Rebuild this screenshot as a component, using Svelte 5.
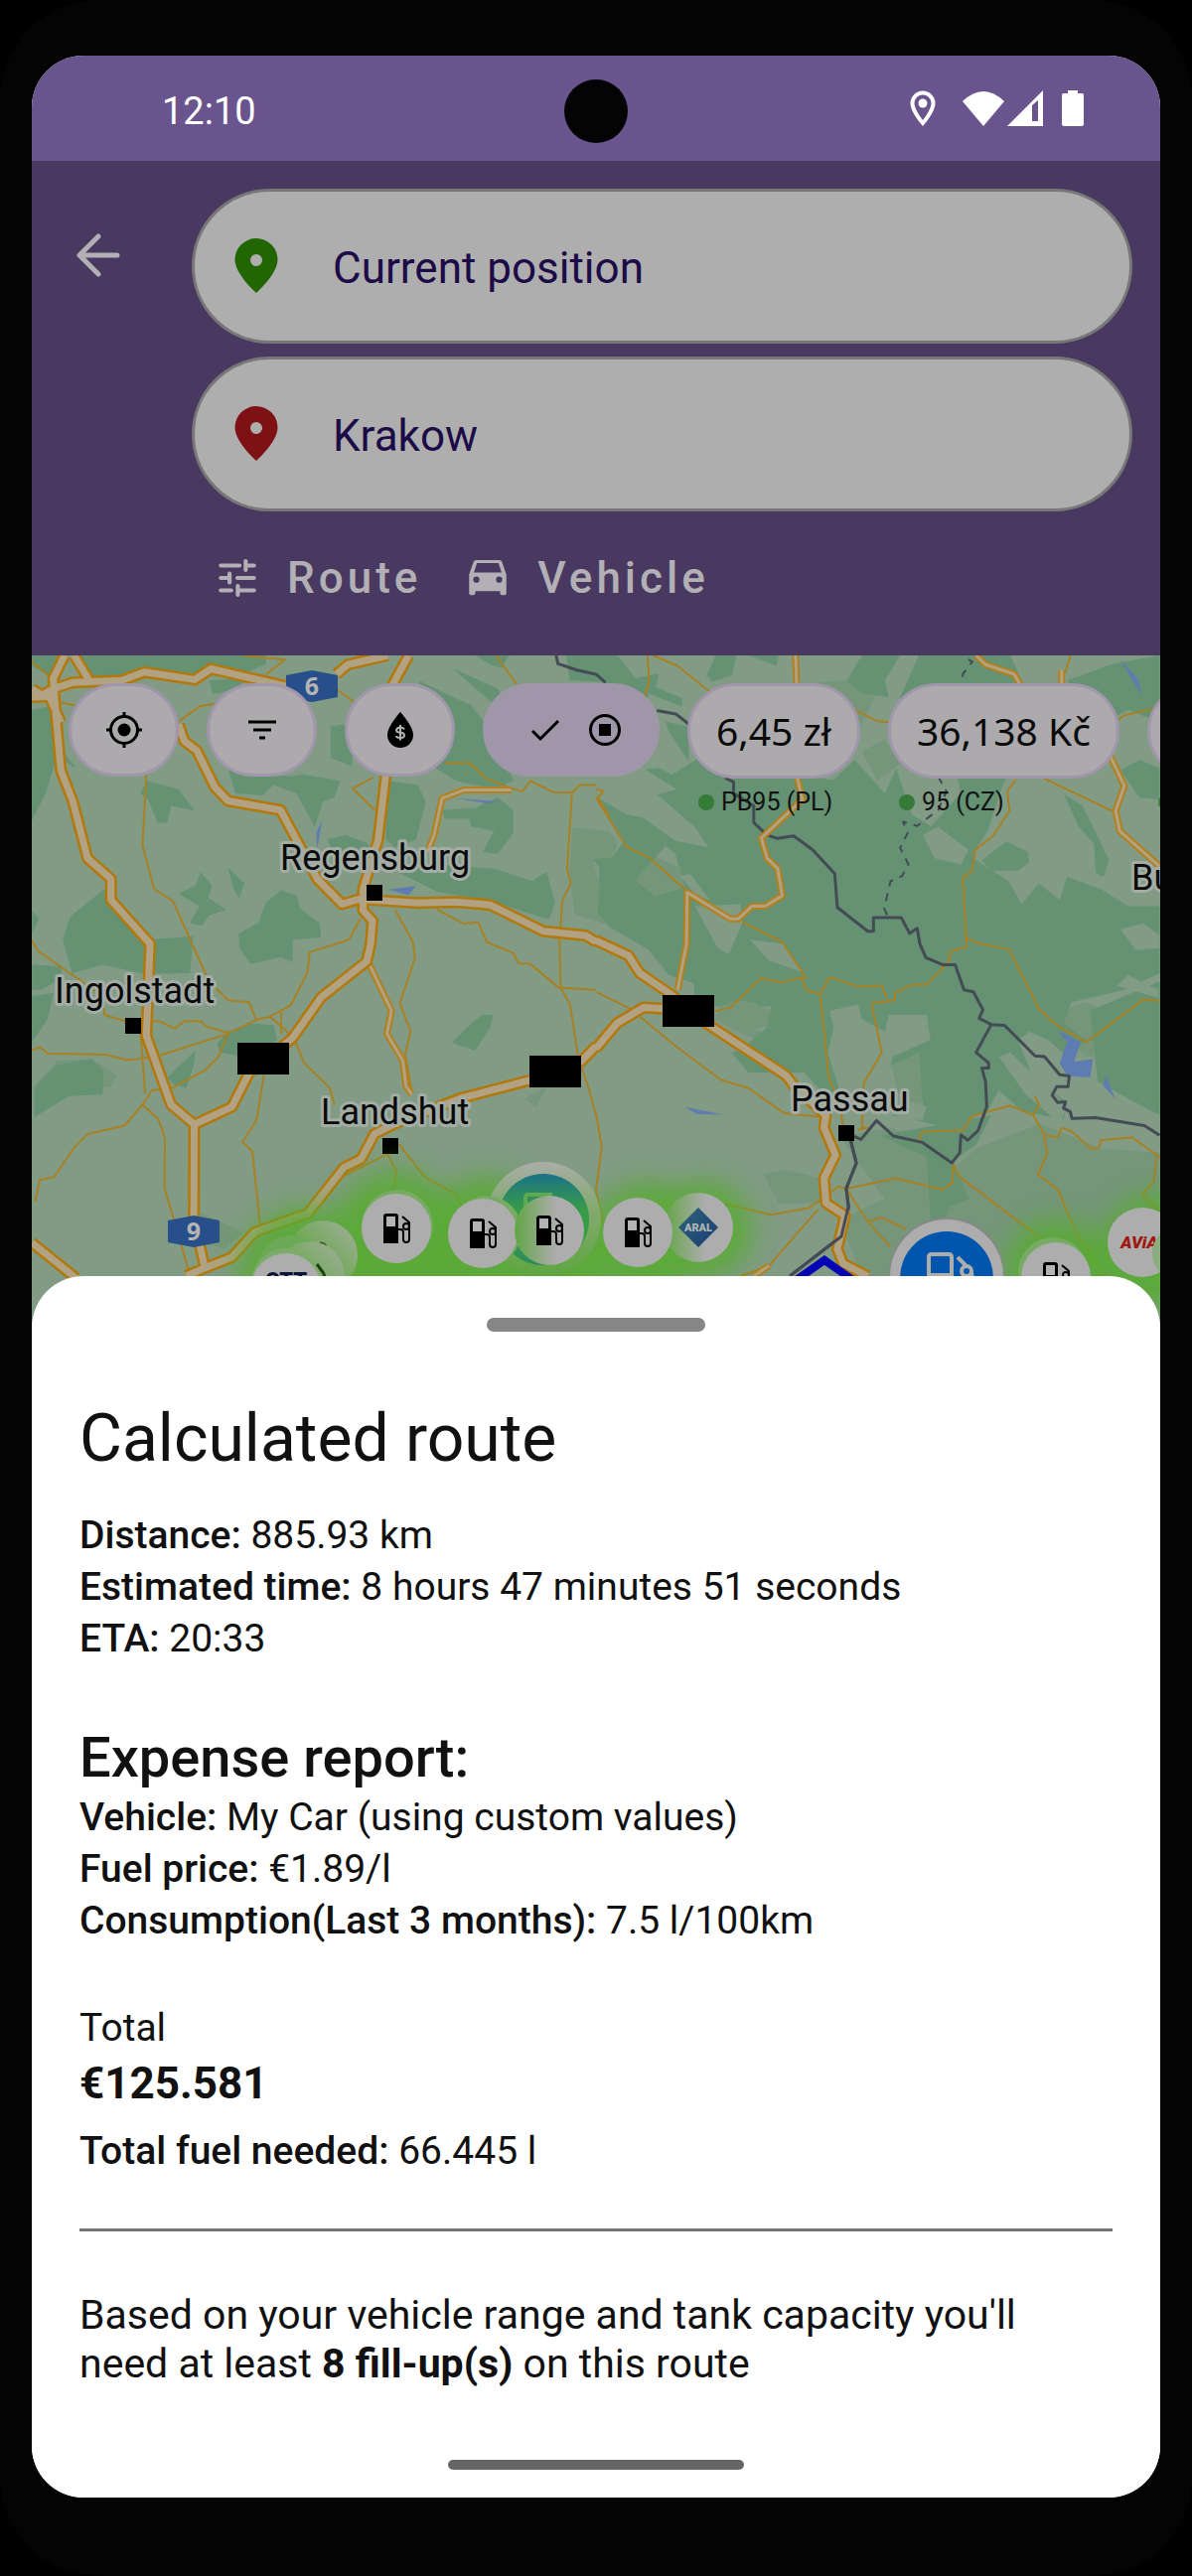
<script>
	// Route planner screen with the calculated route sheet open

	let from = 'Current position';
	let to = 'Krakow';

	const fuelPrices = [
		{ price: '6,45 zł', label: 'PB95 (PL)' },
		{ price: '36,138 Kč', label: '95 (CZ)' }
	];

	const tripDetails = [
		{ name: 'Distance:', value: '885.93 km' },
		{ name: 'Estimated time:', value: '8 hours 47 minutes 51 seconds' },
		{ name: 'ETA:', value: '20:33' }
	];

	const expenses = [
		{ name: 'Vehicle:', value: 'My Car (using custom values)' },
		{ name: 'Fuel price:', value: '€1.89/l' },
		{ name: 'Consumption(Last 3 months):', value: '7.5 l/100km' }
	];

	// Map data. West and east are the two map tiles, each 1568 units wide
	const west = {
		forest: [
			'M84 0H160L130 50L84 25Z', 'M205 0H700V20L640 45L560 20L510 55L380 35L300 60L240 50Z',
			'M550 60L650 55L620 80L560 92Z', 'M84 130L140 120L165 230L200 270L150 240L120 330L84 395Z',
			'M370 330L385 300L470 320L512 372L450 360L440 400L415 400L390 345Z',
			'M700 75L770 80L740 130L700 100Z', 'M870 170L905 165L930 210L925 265L870 245Z',
			'M600 270L760 290L800 285L895 300L880 340L850 350L828 410L780 330L720 310L690 335L620 330Z',
			'M470 570L515 550L528 518L558 550L548 580L595 608L550 622L530 647L500 640L525 600Z',
			'M600 508L643 545L630 580L615 560Z',
			'M85 610L103 630L84 665Z', 'M165 680L185 625L280 555L310 590L390 680L508 672L500 760L380 762L270 740L190 760Z',
			'M628 665L680 640L700 590L740 562L780 575L790 605L840 640L845 675L770 680L770 735L740 722L660 738L630 700Z',
			'M85 740L165 745L155 775L110 800L84 800Z', 'M84 815L140 808L125 870L84 925Z',
			'M90 1035L150 980L240 965L272 995L270 1050L180 1055L90 1105Z',
			'M570 930L600 900L660 880L720 885L730 920L640 960L580 950Z',
			'M440 1010L515 945L510 980L490 1035L455 1025Z',
			'M1020 300L1100 310L1120 350L1095 440L1040 460L1015 440Z',
			'M1250 0H1340L1320 30L1290 22Z',
			'M1100 60L1240 120L1290 180L1330 250L1350 300L1300 320L1200 300L1130 260L1180 225Z',
			'M1165 370L1250 365L1310 340L1350 370L1350 425L1310 475L1270 470L1300 420L1240 410L1235 390L1170 390Z',
			'M860 440L910 430L970 450L960 500L900 510Z',
			'M1050 520L1140 500L1300 510L1400 540L1438 518L1460 590L1445 632L1300 590L1150 565Z',
			'M1190 925L1240 880L1268 860H1298L1290 890L1250 945L1200 930Z',
			'M1190 30L1310 80L1360 150L1290 110Z'
		],
		mid: [
			'M90 1030L150 970L240 965L308 1005L290 1035L250 1030L180 1010Z',
			'M520 1330L640 1380L590 1420L520 1400Z', 'M1380 1060L1440 1030L1410 1080Z'
		],
		water: ['M848 392L835 462L832 425Z', 'M1200 342L1315 350L1280 354Z', 'M1022 560L1094 552L1075 574Z'],
		minor: [
			'M385 285L375 455L405 558L455 588L550 780L600 825L656 830L674 872L600 905L410 960L335 968L280 955L125 952L105 937L84 945',
			'M84 682L100 707L215 780L270 815L275 860L340 878L420 875L460 893L485 875L530 875L540 887L600 903L575 960L540 992L450 1036L400 1040L375 1075L328 1125L230 1145L195 1178L142 1248L105 1255L92 1308',
			'M375 1075L417 1110L434 1155L433 1275L465 1372L500 1485', 'M370 905L382 1048',
			'M948 630L918 680L815 710L808 760L765 837L710 864L674 872', 'M710 864L750 895L780 930L800 975L868 1035L880 1075',
			'M740 850V905', 'M695 1000L675 1112L638 1164L664 1186L685 1370', 'M1040 610L1086 684L1092 724L1052 832L1080 898L1066 955L1085 1050',
			'M1150 608L1220 642L1258 638L1281 686L1350 712L1365 737L1395 738L1470 795L1568 800',
			'M1505 330L1492 510L1502 545L1480 585L1472 680L1475 795L1500 835L1520 955L1550 1040L1568 1100',
			'M1345 318L1375 325L1395 300L1455 327L1505 328L1525 310H1568M1170 257H1235L1280 295L1345 318',
			'M1050 1170L1118 1248L1200 1290L1213 1315', 'M1015 1185L1043 1235L1034 1290', 'M1015 1195L905 1245',
			'M940 30L985 0M985 370L928 318L982 292', 'M470 158L525 122L590 112', 'M640 0L750 10L700 45M820 40L930 110M1305 0L1360 70', 'M84 15L130 50M145 110L200 120'
		],
		major: [
			'M1125 470L1142 430L1163 342L1220 322H1345', 'M972 740L1030 850L1018 905L1060 970L1068 1030L1083 1050'
		],
		motorway: [
			'M170 0L140 55L148 150L160 275L192 350L230 485L292 535V585L395 690L385 910L450 1075L511 1122L510 1345L540 1470',
			'M84 80L110 95L140 80L190 65L320 60L380 40L512 58L555 32L760 75', 'M195 0L235 60', 'M84 100L130 98L160 160',
			'M885 45L915 22L1020 0', 'M1075 0L1030 75', 'M1015 285L995 440L955 560V610L980 635L975 690L965 732L845 818L770 915L655 1000L610 1080L511 1122',
			'M470 165L485 205L518 228L565 315L600 348L738 370L835 535L900 595L945 583L1100 592L1200 590L1290 597L1430 660L1540 670L1568 685',
			'M1400 1015L1210 1060L1040 1120L985 1145L950 1205L905 1225L810 1335L670 1380L610 1440L540 1465L490 1485',
			'M84 1405L200 1490', 'M1525 975L1568 935'
		]
	};

	const east = {
		forest: [
			'M290 50L310 10L360 0L355 30L330 55Z',
			'M400 0H480L475 25Z', 'M660 60L700 0H800L760 60L770 100L700 90Z',
			'M800 100L850 0H1090L1120 60L1140 180L1070 310L1030 420L995 470L1000 500L970 540L900 470L860 480L870 420L960 330L930 200L850 150Z',
			'M300 290L450 300L600 320L680 250L760 330L790 270L830 380L900 420L930 470L965 530L1000 490L1085 540L1120 595L1165 545L1220 585L1240 530L1330 560L1400 600L1483 600V760L1390 800L1250 830L1230 880L1290 920L1240 960L1190 920L1140 900L1110 920L1150 1010L1240 1070L1230 1110L1120 1090L1060 1040L1030 1090L930 1130L780 1100L860 1080L850 950L730 1000L700 1080L600 1050L510 960L360 960L450 890L470 800L300 760Z',
			'M800 1140L1040 1100L1000 1170L940 1210L980 1300L930 1320L900 1400L880 1350L870 1200L750 1150Z',
			'M1240 60L1360 20L1483 0V160L1400 130L1320 170Z', 'M1230 330L1280 360L1350 490L1335 530L1315 520L1310 450L1270 410Z',
			'M1015 490L1080 445L1135 470L1140 495L1110 515L1040 515Z', 'M1300 850L1483 780V1100L1400 1060L1320 1020Z',
			'M1380 275L1430 250L1483 270V345L1430 340Z'
		],
		mid: [
			'M400 100L530 70L760 50L680 200L560 260L480 250L520 170Z',
			'M350 830L420 830L455 860L400 910L345 880Z', 'M640 1150L780 1130L950 1220L1000 1180L1170 1120L1330 1180L1483 1190V1485H700L640 1350L760 1300L680 1200Z',
			'M770 960L860 950L905 985L850 1080L800 1060Z', 'M440 1240L500 1230L590 1250V1310L480 1310Z',
			'M1170 860L1290 830L1430 890L1400 950L1290 960Z', 'M700 230L760 200L800 260L740 300Z'
		],
		clearing: [
			'M260 600L380 595L385 640L350 715L320 700Z',
			'M405 680L490 690L550 760L455 730Z', 'M615 850L690 835L700 870L760 900L770 860L870 860L880 920L780 960L770 1010L800 1060L870 1080L860 1110L810 1115L740 1060L640 1040L610 950L625 890Z',
			'M860 430L900 410L980 465L960 500L890 485Z', 'M1060 960L1090 950L1240 1080L1220 1120L1130 1050Z',
			'M1380 655L1440 640L1483 670V700L1420 705Z', 'M1370 790L1400 765L1480 800V820Z'
		],
		water: ['M1215 898L1275 925L1258 972L1307 966L1300 1010L1240 1006L1220 975L1240 925Z', 'M1342 1005L1365 1060L1335 1030Z', 'M232 1080L335 1099L265 1097Z', 'M1380 10L1425 55L1435 95L1405 50Z'],
		minor: [
			'M135 0L140 60L128 100M150 0L215 25L300 88', 'M0 340L80 458L142 485L240 565', 'M0 805L90 845L210 935L328 1015L402 1036L495 1095L600 1105',
			'M310 852L355 842L432 773L490 782L540 770L552 800L590 810L615 770L690 792L752 790L765 820', 'M385 638L490 686L552 770L540 775',
			'M590 810L613 1015L640 1060L650 1130', 'M725 833L785 825L787 807L830 788H870L930 730L932 708L975 697L965 532L990 515L998 465L1045 432L1088 372L1082 325L1105 297',
			'M975 675L1000 687L1086 703L1165 845L1215 887L1290 925L1440 823L1483 827', 'M725 833L752 950L705 1022L700 1130H715L690 1135',
			'M850 1160L858 1140L965 1136L990 1102L1090 1077L1150 1100L1180 1148L1215 1153L1225 1130L1250 1138L1303 1180L1323 1178L1328 1160L1410 1153L1483 1200',
			'M1155 1055L1166 1077L1150 1100M1178 1148L1187 1190L1163 1242L1215 1278L1262 1380L1300 1430L1335 1485', 'M662 1275L790 1251L910 1278L938 1262L940 1220L960 1250L1170 1395',
			'M340 1312L460 1338L560 1322L640 1270L660 1278L715 1355L775 1415', 'M585 1325L455 1460L380 1485', 'M715 1355L750 1345L815 1372',
			'M0 1095L15 1175L0 1280L20 1360', 'M1475 1200L1468 1258L1438 1290L1483 1330', 'M680 130L740 157L770 160M1180 295L1360 373', 'M1370 157L1390 143L1465 128M1235 40L1248 0', 'M0 320L20 325L5 340L35 385'
		],
		major: [
			'M525 0L528 75M530 295L543 345L435 437L450 485L478 510L490 575L445 600H410L375 630H353L240 567L238 690L215 800', 'M1000 0L1025 22L1100 45L1120 75M1225 35V75',
			'M1350 235L1390 312L1367 372L1378 420L1483 505', 'M415 1485L455 1460'
		],
		motorway: [
			'M0 682L85 718L115 760L195 810L290 880L500 1005L525 1035L605 1100L600 1130L630 1195L600 1250L605 1310L655 1340L635 1420L650 1455L715 1485',
			'M0 940L55 880L125 842L180 845'
		]
	};

	// Woods along the seam between the tiles
	const centre = {
		forest: [
			'M390 0H545L600 70L670 55L660 95L740 130V155L640 115L600 200L500 80L400 75Z',
			'M690 200L760 215V320L700 230Z', 'M820 60L840 0H905L890 60L830 80Z',
			'M485 430L570 480L620 490L720 560L820 580L780 520L665 420L725 405L630 345L670 340L710 360L790 310L1220 380L1260 500V960H1190L1160 1020L1160 1140L1000 1200L1010 1060L900 1060H780L775 990L700 965L640 890L590 860L520 820L485 780L490 640L470 615L530 610L565 560Z',
			'M890 1200L1000 1160L1260 1050V1260H940Z'
		],
		mid: ['M410 520L520 530L545 570L530 610L470 615L490 700L485 780L520 815L415 780L400 650Z', 'M598 680L650 620L690 578L720 600L750 700L660 728Z', 'M850 1060L930 1040L1025 1080V1110L960 1130L1010 1150L1000 1180L840 1100Z'],
		clearing: ['M735 665L765 660L825 740L780 725Z', 'M660 610L690 575L720 600L730 640Z']
	};

	const borders = [
		'M-105 0L-100 20L-50 35L0 45L25 65M160 132L210 140L245 165M340 293L362 303V330L415 360V400L450 430L478 438L520 432L570 465L628 522L635 603L715 660H730V627H803L825 665L845 653L852 690L868 723L912 740H945L968 800L993 805L1018 848L1008 868L1040 883L1075 885L1155 958L1180 960L1220 1003L1245 1006L1242 1032H1212L1200 1052L1215 1070L1235 1068L1230 1083L1248 1092L1252 1108L1315 1106L1443 1125L1483 1148',
		'M1040 883L1000 950L1033 975V987H1015L1025 1020L1028 1080L1005 1137L978 1160L960 1147L957 1190L936 1214L858 1165L783 1150L738 1113L697 1158L665 1145L685 1215L658 1275L665 1320L645 1390L510 1485'
	];

	const cities = [
		{ name: 'Regensburg', x: 282, y: 876, dotX: 369, dotY: 891 },
		{ name: 'Ingolstadt', x: 55, y: 1010, dotX: 126, dotY: 1025 },
		{ name: 'Landshut', x: 323, y: 1132, dotX: 385, dotY: 1146 },
		{ name: 'Passau', x: 796, y: 1119, dotX: 844, dotY: 1133 },
		{ name: 'Bu', x: 1139, y: 896 }
	];

	const hiddenSigns = [
		{ x: 239, y: 1050 },
		{ x: 533, y: 1063 },
		{ x: 667, y: 1002 }
	];

	const shields = [
		{ number: '6', x: 314, y: 691 },
		{ number: '9', x: 195, y: 1240 }
	];

	const glows = [
		{ x: 310, y: 1285, r: 78 },
		{ x: 398, y: 1238, r: 66 },
		{ x: 490, y: 1242, r: 64 },
		{ x: 560, y: 1270, r: 60 },
		{ x: 652, y: 1248, r: 64 },
		{ x: 708, y: 1238, r: 54 },
		{ x: 430, y: 1285, r: 80 },
		{ x: 1063, y: 1278, r: 56 },
		{ x: 1165, y: 1260, r: 64 }
	];
</script>

<main class="device">
	<div class="screen">
		<div class="status-bar">
			<span class="clock">12:10</span>
			<span class="camera"></span>
			<svg class="status-icons" viewBox="0 0 176 36" aria-hidden="true">
				<path d="M13 2.5a10.500 10.500 0 0 0-10.500 10.500c0 8 10.500 20 10.500 20s10.500-12 10.500-20A10.500 10.500 0 0 0 13 2.500z" fill="none" stroke="#fff" stroke-width="4" />
				<circle cx="13" cy="13" r="4.500" fill="#fff" />
				<path d="M53 11Q74-9 95 11L74 36Z" fill="#fff" />
				<path fill-rule="evenodd" d="M98 36L134 0V36ZM123 15V31H129V10Z" fill="#fff" />
				<path d="M159 0h10v3h4q2 0 2 2v29q0 2-2 2h-18q-2 0-2-2V5q0-2 2-2h4z" fill="#fff" />
			</svg>
		</div>

		<header class="header">
			<button type="button" class="back-button" aria-label="Back">
				<svg viewBox="0 0 44 44"><path d="M41 22H4M22 3L3 22L22 41" fill="none" stroke="currentColor" stroke-width="5" stroke-linecap="round" stroke-linejoin="round" /></svg>
			</button>
			<div class="fields">
				<label class="field">
					<svg class="pin start" viewBox="0 0 44 56" aria-label="From"><path fill-rule="evenodd" d="M22 0A21.500 21.500 0 0 0 .5 21.500C.5 36 22 55 22 55S43.500 36 43.500 21.500A21.500 21.500 0 0 0 22 0zM22 16a6 6 0 1 1 0 12a6 6 0 1 1 0-12z" /></svg>
					<input type="text" bind:value={from} />
				</label>
				<label class="field">
					<svg class="pin finish" viewBox="0 0 44 56" aria-label="To"><path fill-rule="evenodd" d="M22 0A21.500 21.500 0 0 0 .5 21.500C.5 36 22 55 22 55S43.500 36 43.500 21.500A21.500 21.500 0 0 0 22 0zM22 16a6 6 0 1 1 0 12a6 6 0 1 1 0-12z" /></svg>
					<input type="text" bind:value={to} />
				</label>
				<div class="actions">
					<button type="button" class="action">
						<svg viewBox="0 0 24 24"><path d="M4 6h9M16 3.900v4.200M16 6h4M4 12h4.200M8.200 9.900v4.200M12 12h8M4 18h5M12.200 15.900v4.200M12.200 18H20" fill="none" stroke="currentColor" stroke-width="2" stroke-linecap="round" /></svg>
						Route
					</button>
					<button type="button" class="action">
						<svg viewBox="0 0 24 24"><path fill-rule="evenodd" fill="currentColor" d="M18.900 4.300c-.2-.6-.8-1-1.400-1h-11C5.800 3.300 5.300 3.700 5.100 4.300L3 10.300v9c0 .6.500 1 1.200 1h.6c.7 0 1.200-.4 1.200-1v-1h12v1c0 .6.500 1 1.200 1h.6c.7 0 1.200-.4 1.200-1v-9zM6.800 4.800h10.400l1.500 4.500H5.300zM6.500 11.300a1.500 1.500 0 1 1 0 3a1.500 1.500 0 1 1 0-3zM17.500 11.300a1.500 1.500 0 1 1 0 3a1.500 1.500 0 1 1 0-3z" /></svg>
						Vehicle
					</button>
				</div>
			</div>
		</header>

		<section class="map" aria-label="Map">
			<svg class="map-canvas" viewBox="32 660 1136 685" preserveAspectRatio="xMidYMin slice">
				<defs>
					<filter id="soft" x="-50%" y="-50%" width="200%" height="200%"><feGaussianBlur stdDeviation="14" /></filter>
					<linearGradient id="ring" x1="0" y1="0" x2="0" y2="1">
						<stop offset="0" stop-color="#aaada8" />
						<stop offset=".4" stop-color="#83aa70" />
						<stop offset="1" stop-color="#5ea63f" />
					</linearGradient>
					<linearGradient id="teal" x1="0" y1="0" x2="0" y2="1">
						<stop offset="0" stop-color="#1b7288" />
						<stop offset=".4" stop-color="#389c46" />
						<stop offset=".7" stop-color="#389c46" />
						<stop offset="1" stop-color="#2a8a62" />
					</linearGradient>
					<linearGradient id="faded" x1="0" y1="0" x2="1" y2="0">
						<stop offset="0" stop-color="#62a545" />
						<stop offset=".6" stop-color="#adadad" />
					</linearGradient>
					<linearGradient id="pale" x1="0" y1="1" x2="1" y2="0">
						<stop offset=".2" stop-color="#58a834" />
						<stop offset="1" stop-color="#a4ad9f" />
					</linearGradient>
					<linearGradient id="aral" x1="0" y1="0" x2="1" y2="1">
						<stop offset="0" stop-color="#2c6478" />
						<stop offset="1" stop-color="#1c3c76" />
					</linearGradient>
					<g id="pump">
						<path d="M-13-12q0-3 3-3h9q3 0 3 3v27h-15z" />
						<rect x="-10" y="-12" width="9" height="10" fill="#b4b4b4" />
						<path d="M2 1h2q3 0 3 3v7q0 3 3 3t3-3V-6L6-12" fill="none" stroke="#000" stroke-width="2" />
						<circle cx="10" cy="-2" r="3" fill="#adadad" stroke="#000" stroke-width="2" />
					</g>
				</defs>

				<rect x="32" y="660" width="1136" height="685" fill="#819b85" />

				<g transform="translate(440 660) scale(.33333)">
					<path class="forest" d={centre.forest.join('')} />
					<path class="mid" d={centre.mid.join('')} />
					<path class="clearing" d={centre.clearing.join('')} />
				</g>
				{#each [{ tile: west, x: 0 }, { tile: east, x: 600 }] as { tile, x }}
					<g transform="translate({x} 660) scale(.38265 .4209)">
						<path class="mid" d={tile.mid.join('')} />
						<path class="forest" d={tile.forest.join('')} />
						<path class="clearing" d={(tile.clearing || []).join('')} />
						<path class="water" d={tile.water.join('')} />
						<path class="line minor" d={tile.minor.join('')} />
					</g>
				{/each}
				<g transform="translate(600 660) scale(.38265 .4209)">
					<path class="line border" d={borders.join('')} />
					<path class="line province" d="M980 10L990 15L965 45L962 70M900 290L922 325L900 370L845 408L808 398L820 425L800 460L822 500L805 528L775 540L758 605L768 625" />
				</g>
				{#each [{ tile: west, x: 0 }, { tile: east, x: 600 }] as { tile, x }}
					<g transform="translate({x} 660) scale(.38265 .4209)">
						<path class="line major-case" d={tile.major.join('')} />
						<path class="line major" d={tile.major.join('')} />
						<path class="line motorway-case" d={tile.motorway.join('')} />
					</g>
				{/each}
				{#each [{ tile: west, x: 0 }, { tile: east, x: 600 }] as { tile, x }}
					<path class="line motorway" transform="translate({x} 660) scale(.38265 .4209)" d={tile.motorway.join('')} />
				{/each}
				<path d="M854 1137L862 1171L852 1197L854 1215L847 1245L795 1285" class="line border" />

				{#each shields as shield}
					<path d="M{shield.x - 26} {shield.y - 11}L{shield.x} {shield.y - 16}L{shield.x + 26} {shield.y - 11}V{shield.y + 11}L{shield.x} {shield.y + 16}L{shield.x - 26} {shield.y + 11}Z" fill="#27508a" />
					<text class="shield-text" x={shield.x} y={shield.y + 9}>{shield.number}</text>
				{/each}

				{#each hiddenSigns as sign}
					<rect x={sign.x} y={sign.y} width="52" height="32" />
				{/each}

				{#each cities as city}
					<text class="city" x={city.x} y={city.y}>{city.name}</text>
					{#if city.dotX}
						<rect x={city.dotX} y={city.dotY} width="16" height="16" />
					{/if}
				{/each}

				<!-- Cheap fuel areas -->
				<g filter="url(#soft)" fill="#58ab31" opacity=".9">
					{#each glows as glow}
						<circle cx={glow.x} cy={glow.y} r={glow.r * 0.9} />
					{/each}
				</g>

				<path d="M800 1290L830 1269L860 1290" fill="none" stroke="#0505b5" stroke-width="8" />

				<!-- Station markers -->
				<circle cx="325" cy="1264" r="35" fill="url(#pale)" />
				<path d="M322 1252q5 0 6 4" fill="none" stroke="#3d5530" stroke-width="3" />
				<circle cx="293" cy="1278" r="34" fill="#6ba957" />
				<circle cx="312" cy="1285" r="35" fill="url(#pale)" />
				<path d="M319 1273l6 8q4 6-1 8" fill="none" stroke="#1c4010" stroke-width="3" />
				<circle cx="288" cy="1292" r="35" fill="#7cac6c" />
				<circle cx="288" cy="1297" r="35" fill="#adadad" />
				<text class="brand otp" x="288" y="1297">OTT</text>

				<circle cx="400" cy="1234" r="36" fill="#77ab63" />
				<circle cx="399" cy="1237" r="35" fill="#adadad" />
				<use href="#pump" x="399" y="1237" />

				<circle cx="547" cy="1228" r="58" fill="url(#ring)" />
				<circle cx="547" cy="1228" r="46" fill="url(#teal)" />
				<path d="M529 1219V1206q0-3 3-3h24" fill="none" stroke="#5fa950" stroke-width="4" />
				<circle cx="490" cy="1239" r="35" fill="#77ab63" />
				<circle cx="486" cy="1242" r="35" fill="#adadad" />
				<use href="#pump" x="486" y="1242" />
				<circle cx="553" cy="1239" r="35" fill="url(#faded)" />
				<use href="#pump" x="553" y="1239" />

				<circle cx="703" cy="1236" r="35" fill="url(#faded)" />
				<path d="M703 1216L723 1236L703 1256L683 1236Z" fill="url(#aral)" />
				<text class="brand aral" x="703" y="1240">ARAL</text>
				<circle cx="642" cy="1241" r="35" fill="#adadad" />
				<use href="#pump" x="642" y="1241" />

				<circle cx="953" cy="1284" r="58" fill="#888" />
				<circle cx="953" cy="1285" r="57" fill="#adadad" />
				<circle cx="953" cy="1287" r="47" fill="#0056ad" />
				<path d="M935 1290V1266q0-3 3-3h17q3 0 3 3v24M935 1284h23M958 1292v-3h6q3 0 3 4M964 1266l12 12q3 4 3 12" fill="none" stroke="#adadad" stroke-width="4" />
				<circle cx="973" cy="1280" r="5" fill="#0056ad" stroke="#adadad" stroke-width="4" />

				<circle cx="1060" cy="1281" r="35" fill="#77ab63" />
				<circle cx="1063" cy="1286" r="35" fill="#adadad" />
				<use href="#pump" x="1063" y="1286" />

				<circle cx="1150" cy="1251" r="35" fill="#adadad" />
				<text class="brand avia" x="1147" y="1257">AViA</text>
				<circle cx="1188" cy="1262" r="28" fill="#8bac7c" />
			</svg>

			<div class="chips">
				<button type="button" class="chip" aria-label="My location">
					<svg viewBox="0 0 36 36"><circle cx="18" cy="18" r="13.500" fill="none" stroke="#000" stroke-width="3" /><circle cx="18" cy="18" r="6.500" /><path d="M18 0V6M18 30V36M0 18H6M30 18H36" stroke="#000" stroke-width="3" /></svg>
				</button>
				<button type="button" class="chip" aria-label="Sort">
					<svg viewBox="0 0 36 36"><path d="M4 10H32M9 18H27M15 26H21" stroke="#000" stroke-width="3" /></svg>
				</button>
				<button type="button" class="chip" aria-label="Fuel prices">
					<svg viewBox="0 0 36 36"><path d="M18 0C18 0 5 14 5 23A13 13 0 0 0 31 23C31 14 18 0 18 0Z" /><path d="M22 17.500q-1-2-4-2t-4 2.500q0 2.500 4 2.700t4 2.800q0 2.500-4 2.500t-4-2M18 13V28.500" fill="none" stroke="#b5b5b5" stroke-width="2" /></svg>
				</button>
				<button type="button" class="chip selected" aria-label="Show stops" aria-pressed="true">
					<svg viewBox="0 0 36 36"><path d="M5 19L13 27L31 9" fill="none" stroke="#000" stroke-width="3" /></svg>
					<svg viewBox="0 0 36 36"><circle cx="18" cy="18" r="14.500" fill="none" stroke="#000" stroke-width="3" /><rect x="12" y="12" width="12" height="12" /></svg>
				</button>
				{#each fuelPrices as fuel}
					<div class="fuel">
						<button type="button" class="chip price">{fuel.price}</button>
						<span class="fuel-label"><i class="dot"></i>{fuel.label}</span>
					</div>
				{/each}
				<!-- Next price is still loading -->
				<div class="fuel">
					<button type="button" class="chip price" aria-label="Next fuel price"></button>
					<span class="fuel-label"><i class="dot"></i></span>
				</div>
			</div>
		</section>

		<section class="sheet">
			<div class="handle"></div>
			<h1>Calculated route</h1>
			{#each tripDetails as row}
				<p class="row"><b>{row.name}</b> {row.value}</p>
			{/each}

			<h2>Expense report:</h2>
			{#each expenses as row}
				<p class="row"><b>{row.name}</b> {row.value}</p>
			{/each}

			<p class="row total-label">Total</p>
			<p class="total">€125.581</p>
			<p class="row fuel-needed"><b>Total fuel needed:</b> 66.445 l</p>

			<hr />

			<p class="summary">Based on your vehicle range and tank capacity you'll need at least <b>8 fill-up(s)</b> on this route</p>
			<div class="home-bar"></div>
		</section>
	</div>
</main>

<style>
	:global(body) {
		margin: 0;
		background: #000;
	}

	.device {
		box-sizing: border-box;
		padding: 56px 32px 79px;
		background: #040404;
		border-radius: 100px;
		font-family: Roboto, sans-serif;
		color: #111;
	}

	.screen {
		overflow: hidden;
		border-radius: 52px;
		background: #fff;
	}

	button {
		border: none;
		padding: 0;
		background: none;
		font: inherit;
		color: inherit;
		cursor: pointer;
	}

	svg {
		display: block;
	}

	/* Status bar */
	.status-bar {
		display: grid;
		grid-template-columns: 1fr 64px 1fr;
		align-items: center;
		box-sizing: border-box;
		height: 106px;
		padding-top: 6px;
		background: #6a548e;
	}

	.clock {
		padding-left: 131px;
		font-size: 38px;
		line-height: 52px;
		color: #fff;
	}

	.camera {
		width: 64px;
		height: 64px;
		border-radius: 50%;
		background: #040404;
	}

	.status-icons {
		width: 176px;
		height: 36px;
		margin: 0 76px 6px 0;
		justify-self: end;
	}

	/* Header with the start and finish fields */
	.header {
		display: flex;
		align-items: flex-start;
		gap: 72px;
		padding: 28px 28px 52px 45px;
		background: #493960;
		color: #b2b0b5;
	}

	.back-button {
		width: 44px;
		margin-top: 45px;
	}

	.fields {
		flex: 1;
		display: flex;
		flex-direction: column;
		gap: 13px;
	}

	.field {
		display: flex;
		align-items: center;
		gap: 55px;
		box-sizing: border-box;
		height: 156px;
		padding: 0 41px 0 40px;
		border: 3px solid #777;
		border-radius: 78px;
		background: #aeaeae;
	}

	.pin {
		width: 44px;
		height: 56px;
	}

	.start {
		fill: #216600;
	}

	.finish {
		fill: #7d1113;
	}

	.field input {
		flex: 1;
		min-width: 0;
		padding: 4px 0 0;
		border: none;
		outline: none;
		background: none;
		font-family: inherit;
		font-size: 44px;
		line-height: 60px;
		color: #1c0b47;
	}

	.actions {
		display: flex;
		gap: 42px;
		margin-top: 28px;
		padding-left: 21px;
	}

	.action {
		display: flex;
		align-items: center;
		gap: 25px;
		font-size: 44px;
		font-weight: 500;
		line-height: 52px;
		letter-spacing: 4px;
	}

	.action svg {
		width: 50px;
		height: 50px;
	}

	/* Map */
	.map {
		position: relative;
		min-height: 685px;
		overflow: hidden;
	}

	.map-canvas {
		position: absolute;
		inset: 0;
		width: 100%;
		height: 100%;
	}

	.forest {
		fill: #649272;
	}

	.mid {
		fill: #75967a;
	}

	.clearing {
		fill: #819b85;
	}

	.water {
		fill: #5f7cb2;
	}

	.line {
		fill: none;
		stroke-linejoin: round;
		vector-effect: non-scaling-stroke;
	}

	.minor {
		stroke: #a98122;
		stroke-width: 2px;
	}

	.major-case {
		stroke: #b3801d;
		stroke-width: 7px;
	}

	.major {
		stroke: #b0a283;
		stroke-width: 3px;
	}

	.motorway-case {
		stroke: #b3780a;
		stroke-width: 12px;
	}

	.motorway {
		stroke: #b0a283;
		stroke-width: 7px;
	}

	.border {
		stroke: #444b54;
		stroke-width: 3px;
	}

	.province {
		stroke: #444b54;
		stroke-width: 2px;
		stroke-dasharray: 8 7;
	}

	.city {
		font-size: 36px;
		fill: #0a0a0a;
		stroke: #a3ada5;
		stroke-width: 6px;
		stroke-linejoin: round;
		paint-order: stroke;
	}

	.shield-text {
		font-family: 'Open Sans', sans-serif;
		font-size: 25px;
		font-weight: 700;
		text-anchor: middle;
		fill: #b5b5b5;
	}

	.brand {
		font-weight: 900;
		text-anchor: middle;
	}

	.aral {
		font-size: 11px;
		fill: #adb5b5;
	}

	.avia {
		font-size: 17px;
		font-style: italic;
		fill: #a01510;
	}

	.otp {
		font-size: 22px;
		fill: #0b1736;
	}

	.chips {
		position: relative;
		display: flex;
		align-items: flex-start;
		gap: 28px;
		padding: 28px 0 0 37px;
	}

	.chip {
		box-sizing: border-box;
		display: flex;
		flex: none;
		align-items: center;
		justify-content: center;
		gap: 24px;
		min-width: 111px;
		height: 94px;
		border: 3px solid #a196ab;
		border-radius: 48px;
		background: #adaaae;
		color: #0a0a0a;
	}

	.chip svg {
		width: 36px;
		height: 36px;
	}

	.chip.selected {
		width: 178px;
		padding-left: 8px;
		border-color: #a096a9;
		background: #a096a9;
	}

	.chip.price {
		height: 96px;
		padding: 0 26px;
		font-family: 'Noto Sans', sans-serif;
		font-size: 39px;
		line-height: 52px;
		white-space: nowrap;
	}

	.fuel {
		display: flex;
		flex: none;
		flex-direction: column;
		gap: 10px;
	}

	.fuel-label {
		display: flex;
		align-items: center;
		gap: 7px;
		min-height: 28px;
		padding-left: 11px;
		font-size: 25px;
		line-height: 28px;
		white-space: nowrap;
	}

	.dot {
		width: 16px;
		height: 16px;
		border-radius: 50%;
		background: #367a38;
	}

	/* Calculated route sheet */
	.sheet {
		position: relative;
		margin-top: -60px;
		padding: 42px 48px 28px;
		border-radius: 52px 52px 0 0;
		background: #fff;
	}

	.handle {
		width: 220px;
		height: 14px;
		margin: 0 auto 68px;
		border-radius: 7px;
		background: #868686;
	}

	h1,
	h2,
	p {
		margin: 0;
	}

	h1 {
		margin-bottom: 31px;
		font-size: 66px;
		font-weight: 400;
		line-height: 80px;
	}

	h2 {
		margin-top: 60px;
		font-size: 56px;
		font-weight: 500;
		line-height: 68px;
	}

	.row {
		font-size: 39px;
		line-height: 52px;
	}

	.row b {
		font-weight: 500;
	}

	.total-label {
		margin-top: 56px;
	}

	.total {
		font-size: 44px;
		font-weight: 700;
		line-height: 60px;
	}

	.fuel-needed {
		margin-top: 12px;
	}

	hr {
		height: 3px;
		margin: 52px 0 60px;
		border: none;
		background: #757575;
	}

	.summary {
		font-size: 41px;
		line-height: 49px;
	}

	.summary b {
		font-weight: 700;
	}

	.home-bar {
		width: 298px;
		height: 10px;
		margin: 72px auto 0;
		border-radius: 5px;
		background: #656565;
	}
</style>
